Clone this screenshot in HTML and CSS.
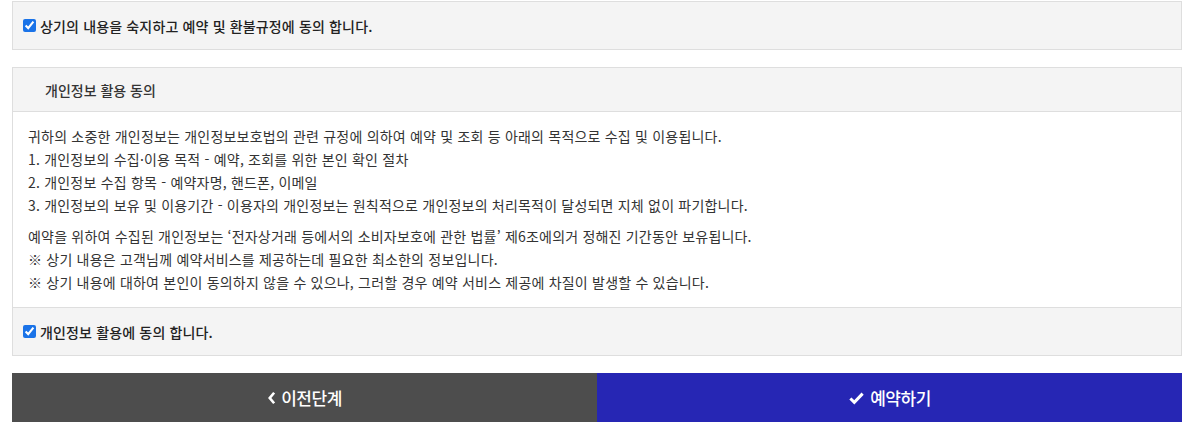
FILE: index.html
```html
<!DOCTYPE html>
<html lang="ko">
<head>
<meta charset="utf-8">
<link rel="stylesheet" href="styles.css">
</head>
<body>
<div class="page">
  <div class="box agree-box">
    <label class="agree"><input type="checkbox" checked> 상기의 내용을 숙지하고 예약 및 환불규정에 동의 합니다.</label>
  </div>

  <div class="box privacy">
    <div class="privacy-head">개인정보 활용 동의</div>
    <div class="privacy-body">
      <p>귀하의 소중한 개인정보는 개인정보보호법의 관련 규정에 의하여 예약 및 조회 등 아래의 목적으로 수집 및 이용됩니다.<br>
      1. 개인정보의 수집·이용 목적 - 예약, 조회를 위한 본인 확인 절차<br>
      2. 개인정보 수집 항목 - 예약자명, 핸드폰, 이메일<br>
      3. 개인정보의 보유 및 이용기간 - 이용자의 개인정보는 원칙적으로 개인정보의 처리목적이 달성되면 지체 없이 파기합니다.</p>
      <p>예약을 위하여 수집된 개인정보는 ‘전자상거래 등에서의 소비자보호에 관한 법률’ 제6조에의거 정해진 기간동안 보유됩니다.<br>
      ※ 상기 내용은 고객님께 예약서비스를 제공하는데 필요한 최소한의 정보입니다.<br>
      ※ 상기 내용에 대하여 본인이 동의하지 않을 수 있으나, 그러할 경우 예약 서비스 제공에 차질이 발생할 수 있습니다.</p>
    </div>
    <div class="privacy-foot">
      <label class="agree"><input type="checkbox" checked> 개인정보 활용에 동의 합니다.</label>
    </div>
  </div>

  <div class="actions">
    <button class="btn btn-prev" type="button">
      <svg class="ico" viewBox="0 0 10 16" width="9" height="14"><path d="M8 2 L3 8 L8 14" fill="none" stroke="#fff" stroke-width="3"/></svg>
      이전단계
    </button>
    <button class="btn btn-next" type="button">
      <svg class="ico" viewBox="0 0 18 16" width="17" height="14"><path d="M2 8.5 L6.5 13 L16 3" fill="none" stroke="#fff" stroke-width="3.4"/></svg>
      예약하기
    </button>
  </div>
</div>
</body>
</html>
```

FILE: styles.css
```css
* { box-sizing: border-box; }
html, body { margin: 0; padding: 0; background: #fff; }
body {
  font-family: "Noto Sans CJK KR", "Noto Sans", sans-serif;
  font-size: 14px;
  color: #333;
}
.page {
  padding: 1px 13px 0 12px;
  width: 1195px;
}
.box {
  background: #f4f4f4;
  border: 1px solid #dedede;
}
.agree-box {
  height: 49px;
  display: flex;
  align-items: center;
  padding-left: 10px;
}
.agree {
  display: flex;
  align-items: center;
  font-weight: 500;
  color: #222;
  font-size: 14px;
  letter-spacing: 0.15px;
}
.agree input {
  width: 13px;
  height: 13px;
  margin: 0 4px 0 0;
  accent-color: #1a73e8;
}
.privacy {
  margin-top: 17px;
}
.privacy-head {
  height: 44px;
  display: flex;
  align-items: center;
  padding-left: 32px;
  font-weight: 500;
  color: #333;
  border-bottom: 1px solid #dedede;
}
.privacy-body {
  background: #fff;
  padding: 13px 15px 13px;
  line-height: 23px;
  color: #333;
  letter-spacing: 0.2px;
}
.privacy-body p { margin: 0; }
.privacy-body p + p { margin-top: 8px; }
.privacy-foot {
  height: 48px;
  display: flex;
  align-items: center;
  padding-left: 10px;
  border-top: 1px solid #dedede;
}
.actions {
  margin-top: 17px;
  display: flex;
}
.btn {
  flex: 1;
  height: 49px;
  border: 0;
  color: #fff;
  font-family: "Noto Sans CJK KR", sans-serif;
  font-size: 17px;
  font-weight: 500;
  display: flex;
  align-items: center;
  justify-content: center;
  gap: 5px;
  letter-spacing: -0.5px;
}
.btn-prev { background: #4d4d4d; }
.btn-next { background: #2626b4; }
.ico { display: block; }
```
